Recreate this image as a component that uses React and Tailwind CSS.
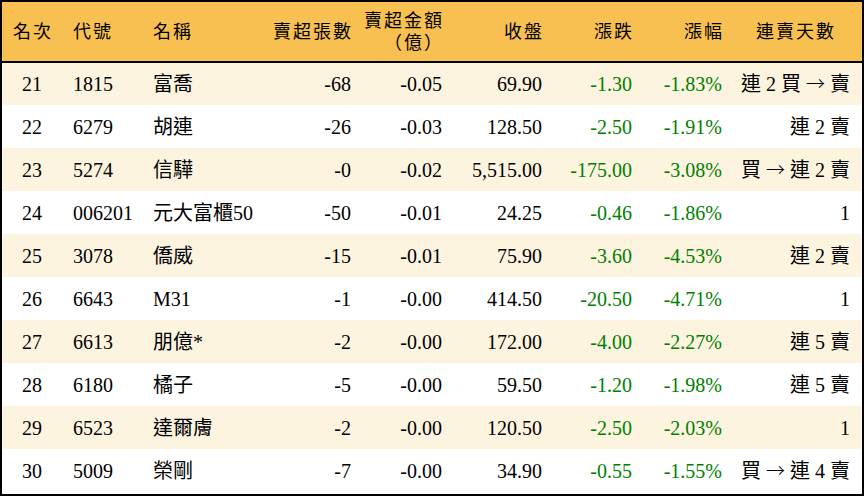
const rows = [
  ['21', '1815', '富喬', '-68', '-0.05', '69.90', '-1.30', '-1.83%', '連 2 買 → 賣'],
  ['22', '6279', '胡連', '-26', '-0.03', '128.50', '-2.50', '-1.91%', '連 2 賣'],
  ['23', '5274', '信驊', '-0', '-0.02', '5,515.00', '-175.00', '-3.08%', '買 → 連 2 賣'],
  ['24', '006201', '元大富櫃50', '-50', '-0.01', '24.25', '-0.46', '-1.86%', '1'],
  ['25', '3078', '僑威', '-15', '-0.01', '75.90', '-3.60', '-4.53%', '連 2 賣'],
  ['26', '6643', 'M31', '-1', '-0.00', '414.50', '-20.50', '-4.71%', '1'],
  ['27', '6613', '朋億*', '-2', '-0.00', '172.00', '-4.00', '-2.27%', '連 5 賣'],
  ['28', '6180', '橘子', '-5', '-0.00', '59.50', '-1.20', '-1.98%', '連 5 賣'],
  ['29', '6523', '達爾膚', '-2', '-0.00', '120.50', '-2.50', '-2.03%', '1'],
  ['30', '5009', '榮剛', '-7', '-0.00', '34.90', '-0.55', '-1.55%', '買 → 連 4 賣'],
]

const font = { fontFamily: '"Liberation Serif", "Noto Sans CJK TC", serif' }

// the arrow in the streak text is full width in the reference, so take it from the CJK font
function Streak({ text }) {
  const parts = text.split('→')
  return (
    <>
      {parts.map((p, i) => (
        <span key={i}>
          {p}
          {i < parts.length - 1 && (
            <span className="font-['Noto_Sans_CJK_TC',sans-serif] font-light text-[19px]">→</span>
          )}
        </span>
      ))}
    </>
  )
}

export default function App() {
  return (
    <div className="w-[864px] h-[496px] bg-white" style={font}>
      <div className="border-2 border-black h-[496px] overflow-hidden">
        <table className="table-fixed border-collapse w-[860px] text-[20px] text-black">
          <colgroup>
            <col className="w-[60px]" />
            <col className="w-[78px]" />
            <col className="w-[120px]" />
            <col className="w-[100px]" />
            <col className="w-[90px]" />
            <col className="w-[100px]" />
            <col className="w-[90px]" />
            <col className="w-[90px]" />
            <col className="w-[132px]" />
          </colgroup>
          <thead>
            <tr className="h-[60px] bg-[#f8c050] border-b-2 border-black leading-[22px] text-[18px] tracking-[2px]">
              <th className="font-normal text-center pl-[2px]">名次</th>
              <th className="font-normal text-left pl-[11px]">代號</th>
              <th className="font-normal text-left pl-[13px]">名稱</th>
              <th className="font-normal text-right pr-[7px]">賣超張數</th>
              <th className="font-normal text-right pr-[6px]">
                <div>賣超金額</div>
                <div>（億）</div>
              </th>
              <th className="font-normal text-right pr-[6px]">收盤</th>
              <th className="font-normal text-right pr-[6px]">漲跌</th>
              <th className="font-normal text-right pr-[6px]">漲幅</th>
              <th className="font-normal text-center">連賣天數</th>
            </tr>
          </thead>
          <tbody>
            {rows.map((r, i) => (
              <tr key={r[0]} className={`h-[43px] ${i % 2 === 0 ? 'bg-[#fdf4e0]' : 'bg-white'}`}>
                <td className="text-center">{r[0]}</td>
                <td className="text-left pl-[11px]">{r[1]}</td>
                <td className="text-left pl-[13px] whitespace-nowrap">{r[2]}</td>
                <td className="text-right pr-[9px]">{r[3]}</td>
                <td className="text-right pr-[8px]">{r[4]}</td>
                <td className="text-right pr-[8px]">{r[5]}</td>
                <td className="text-right pr-[8px] text-[#008000]">{r[6]}</td>
                <td className="text-right pr-[8px] text-[#008000]">{r[7]}</td>
                <td className="text-right pr-[12px] whitespace-nowrap">
                  <Streak text={r[8]} />
                </td>
              </tr>
            ))}
          </tbody>
        </table>
      </div>
    </div>
  )
}
